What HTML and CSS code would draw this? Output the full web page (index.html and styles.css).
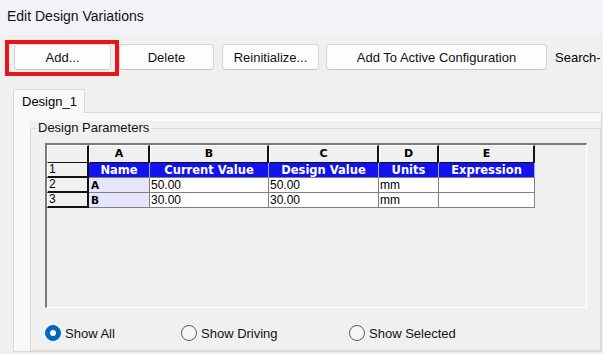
FILE: index.html
```html
<!DOCTYPE html>
<html lang="en">
<head>
  <meta charset="UTF-8" />
  <title>Edit Design Variations</title>
  <link rel="stylesheet" href="styles.css">
</head>
<body>

<div class="titlebar">Edit Design Variations</div>

<div class="toolbar">
  <div class="btn-wrap highlighted">
    <button class="btn btn-add">Add...</button>
  </div>
  <button class="btn btn-delete">Delete</button>
  <button class="btn btn-reinit">Reinitialize...</button>
  <button class="btn btn-active">Add To Active Configuration</button>
  <span class="search-label">Search-</span>
</div>

<div class="tabs">
  <div class="tab">Design_1</div>
</div>

<div class="panel">
  <div class="group">
    <div class="group-head"><span>Design Parameters</span></div>
    <div class="group-body">
      <div class="sheet-area">
        <div class="sheet">
          <div class="c-head"></div>
          <div class="c-head">A</div>
          <div class="c-head">B</div>
          <div class="c-head">C</div>
          <div class="c-head">D</div>
          <div class="c-head">E</div>

          <div class="c-row">1</div>
          <div class="c-title">Name</div>
          <div class="c-title">Current Value</div>
          <div class="c-title">Design Value</div>
          <div class="c-title">Units</div>
          <div class="c-title">Expression</div>

          <div class="c-row">2</div>
          <div class="c-name">A</div>
          <div class="c-data">50.00</div>
          <div class="c-data">50.00</div>
          <div class="c-data">mm</div>
          <div class="c-data"></div>

          <div class="c-row">3</div>
          <div class="c-name">B</div>
          <div class="c-data">30.00</div>
          <div class="c-data">30.00</div>
          <div class="c-data">mm</div>
          <div class="c-data"></div>
        </div>
      </div>

      <div class="radios">
        <label class="radio"><span class="radio-dot checked"></span>Show All</label>
        <label class="radio"><span class="radio-dot"></span>Show Driving</label>
        <label class="radio"><span class="radio-dot"></span>Show Selected</label>
      </div>
    </div>
  </div>
</div>

</body>
</html>
```

FILE: styles.css
```css
body {
  margin: 0;
  background: #f0f0f0;
  font-family: "Liberation Sans", Arial, sans-serif;
  font-size: 13px;
  color: #000;
  overflow: hidden;
}

/* Window title */
.titlebar {
  height: 35px;
  line-height: 32px;
  padding-left: 7px;
  background: #f3f2f7;
  font-size: 14px;
  color: #111;
}

/* Toolbar buttons */
.toolbar {
  display: flex;
  align-items: center;
  gap: 8px;
  padding: 9px 0 0 14px;
}
.btn {
  height: 26px;
  padding: 0;
  background: #fdfdfd;
  border: 1px solid #d3d3d3;
  border-bottom-color: #c4c4c4;
  border-radius: 4px;
  font-family: inherit;
  font-size: 13px;
  color: #111;
}
.btn-add { width: 97px; display: block; }
.btn-delete { width: 95px; }
.btn-reinit { width: 97px; }
.btn-active { width: 221px; margin-left: -1px; }
.btn-wrap {
  position: relative;
}
.highlighted::after {
  content: "";
  position: absolute;
  left: -9px;
  top: -4px;
  right: -8px;
  bottom: -6px;
  border: 4px solid #e8141c;
}

/* Tabs */
.tabs {
  display: flex;
  margin-top: 19px;
  padding-left: 13px;
}
.tab {
  position: relative;
  width: 72px;
  height: 24px;
  box-sizing: border-box;
  margin-bottom: -1px;
  padding: 4px 0 0 8px;
  background: #f9f9f9;
  border: 1px solid #d9d9d9;
  border-bottom: none;
}
.panel {
  margin: 0 1px 0 13px;
  padding: 8px 0 0 16px;
  background: #f9f9f9;
  border: 1px solid #d9d9d9;
}

/* Group box */
.group {
  background: #f0f0f0;
}
.group-head {
  display: flex;
  height: 14px;
  line-height: 14px;
}
.group-head::before,
.group-head::after {
  content: "";
  align-self: flex-end;
  height: 7px;
  box-sizing: border-box;
  border-top: 1px solid #dcdcdc;
}
.group-head::before {
  width: 6px;
  border-left: 1px solid #dcdcdc;
}
.group-head::after {
  flex: 1;
  border-right: 1px solid #dcdcdc;
}
.group-head span {
  padding: 0 2px;
  color: #111;
}
.group-body {
  padding: 8px 13px 9px 14px;
  border: 1px solid #dcdcdc;
  border-top: none;
}

/* Spreadsheet */
.sheet-area {
  height: 165px;
  box-sizing: border-box;
  border-top: 2px solid #7a7a7a;
  border-left: 2px solid #7a7a7a;
  border-right: 1px solid #fff;
  border-bottom: 1px solid #fff;
  background: #f0f0f0;
}
.sheet {
  display: grid;
  grid-template-columns: 42px 61px 119px 110px 60px 96px;
  grid-template-rows: 18px repeat(3, 15px);
}
.sheet > div {
  box-sizing: border-box;
  overflow: hidden;
  white-space: nowrap;
}
.c-head {
  background: #f0f0f0;
  border-top: 1px solid #fff;
  border-left: 1px solid #fff;
  border-right: 2px solid #111;
  border-bottom: 1px solid #111;
  font-family: "DejaVu Sans", sans-serif;
  font-weight: bold;
  font-size: 11px;
  line-height: 16px;
  text-align: center;
}
.c-row {
  background: #f0f0f0;
  border-left: 1px solid #fff;
  border-right: 2px solid #111;
  border-bottom: 2px solid #111;
  font-size: 12px;
  line-height: 13px;
  padding-left: 1px;
}
.c-title {
  background: #1212f0;
  color: #fff;
  border-right: 1px solid #a8a8d8;
  border-bottom: 1px solid #808080;
  font-family: "DejaVu Sans", sans-serif;
  font-weight: bold;
  font-size: 11.5px;
  line-height: 14px;
  text-align: center;
}
.c-name {
  background: #e6e6fa;
  border-right: 1px solid #808080;
  border-bottom: 1px solid #808080;
  font-family: "DejaVu Sans", sans-serif;
  font-weight: bold;
  font-size: 10.5px;
  line-height: 15px;
  padding-left: 2px;
}
.c-data {
  background: #fff;
  border-right: 1px solid #808080;
  border-bottom: 1px solid #808080;
  font-size: 12px;
  line-height: 15px;
  padding-left: 1px;
}

/* Filter radios */
.radios {
  display: grid;
  grid-template-columns: 136px 168px 1fr;
  margin-top: 17px;
  height: 16px;
}
.radio {
  display: flex;
  align-items: center;
  gap: 4px;
  color: #111;
}
.radio-dot {
  width: 16px;
  height: 16px;
  box-sizing: border-box;
  border-radius: 50%;
  border: 1px solid #5c5c5c;
  background: #f6f6f6;
  display: flex;
  align-items: center;
  justify-content: center;
}
.radio-dot.checked {
  background: #0067c0;
  border-color: #0067c0;
}
.radio-dot.checked::after {
  content: "";
  width: 6px;
  height: 6px;
  border-radius: 50%;
  background: #fff;
}
```
